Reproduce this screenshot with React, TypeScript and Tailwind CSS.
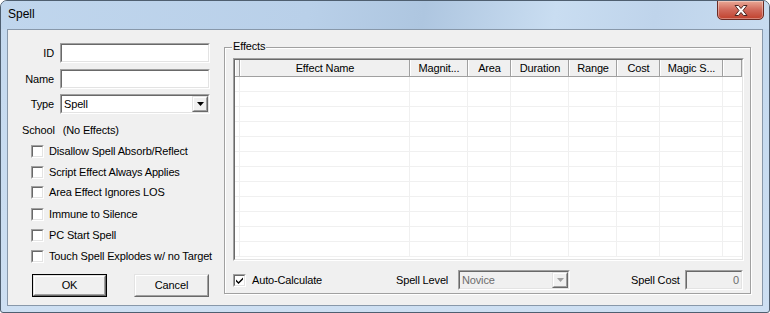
import type { ReactNode } from 'react';

// sunken 3D edge used by edits, list view and check boxes
const Sunken = ({ className = '', inner = '', children }: { className?: string; inner?: string; children?: ReactNode }) => (
    <div className={`border border-t-[#a0a0a0] border-l-[#a0a0a0] border-b-white border-r-white ${className}`}>
        <div className={`h-full w-full border border-t-[#696969] border-l-[#696969] border-b-[#e3e3e3] border-r-[#e3e3e3] ${inner}`}>
            {children}
        </div>
    </div>
);

const Raised = ({ className = '', children }: { className?: string; children?: ReactNode }) => (
    <div className={`border border-t-[#e3e3e3] border-l-[#e3e3e3] border-b-[#696969] border-r-[#696969] ${className}`}>
        <div className="h-full w-full border border-t-white border-l-white border-b-[#a0a0a0] border-r-[#a0a0a0] bg-[#f0f0f0] flex items-center justify-center">
            {children}
        </div>
    </div>
);

const Arrow = ({ color = '#000' }: { color?: string }) => (
    <svg width="7" height="4" viewBox="0 0 7 4">
        <path d="M0 0h7L3.5 4z" fill={color} />
    </svg>
);

const CheckBox = ({ checked = false }: { checked?: boolean }) => (
    <Sunken className="w-[13px] h-[13px] shrink-0" inner="bg-white flex items-center justify-center">
        {checked && (
            <svg width="7" height="7" viewBox="0 0 7 7">
                <path d="M0 2.5l2.5 2.5L7 0.5v2L2.5 7 0 4.5z" fill="#000" />
            </svg>
        )}
    </Sunken>
);

const Field = ({ label, children, mt }: { label: string; children: ReactNode; mt: string }) => (
    <div className={`flex items-center h-[20px] ${mt}`}>
        <span className="w-[46px] text-right">{label}</span>
        <div className="ml-[6px]">{children}</div>
    </div>
);

const flags = [
    { text: 'Disallow Spell Absorb/Reflect', mt: 'mt-[8px]' },
    { text: 'Script Effect Always Applies', mt: 'mt-[8px]' },
    { text: 'Area Effect Ignores LOS', mt: 'mt-[7px]' },
    { text: 'Immune to Silence', mt: 'mt-[9px]' },
    { text: 'PC Start Spell', mt: 'mt-[8px]' },
    { text: 'Touch Spell Explodes w/ no Target', mt: 'mt-[8px]' },
];

const columns = [
    { name: '', w: 'w-[5px]' },
    { name: 'Effect Name', w: 'w-[170px]' },
    { name: 'Magnit...', w: 'w-[58px]' },
    { name: 'Area', w: 'w-[43px]' },
    { name: 'Duration', w: 'w-[58px]' },
    { name: 'Range', w: 'w-[48px]' },
    { name: 'Cost', w: 'w-[43px]' },
    { name: 'Magic S...', w: 'w-[63px]' },
    { name: '', w: 'flex-1' },
];

export default function App() {
    return (
        <div className="w-[770px] h-[313px] relative overflow-hidden rounded-t-[7px] rounded-b-[3px] border border-[#4f5f70] bg-gradient-to-b from-[#c3d8ee] to-[#cddff2] font-['Liberation_Sans',sans-serif] text-[11px] tracking-[-0.15px] text-black leading-none">
            {/* Title bar */}
            <div className="h-[28px] flex items-center pl-[7px] pb-[3px] bg-[linear-gradient(100deg,#c0d6ed_0%,#b9d0e9_40%,#aec6e0_55%,#c9ddf1_72%,#bfd4eb_85%,#c8dcf0_100%)] text-[12px] tracking-normal">
                Spell
            </div>
            <div className="absolute top-[-1px] right-[5px] w-[47px] h-[20px] rounded-b-[5px] border border-[#6b2b24] bg-gradient-to-b from-[#e8a896] via-[#d0685a] to-[#c0402c] flex items-center justify-center shadow-[inset_0_0_0_1px_rgba(255,255,255,0.35)]">
                <svg width="14" height="11" viewBox="0 0 14 11">
                    <path d="M1 0.5h3.5L7 3.5l2.5-3H13L9 5.5l4 5H9.5L7 7.5l-2.5 3H1l4-5z" fill="#fff" stroke="#4a2420" strokeWidth="1" />
                </svg>
            </div>

            {/* Client area */}
            <div className="ml-[6px] w-[756px] h-[277px] border border-[#8898aa] bg-[#f0f0f0] flex">
                {/* Left column */}
                <div className="w-[208px] shrink-0 flex flex-col whitespace-nowrap">
                    <Field label="ID" mt="mt-[13px]">
                        <Sunken className="w-[150px] h-[20px]" inner="bg-white" />
                    </Field>
                    <Field label="Name" mt="mt-[6px]">
                        <Sunken className="w-[150px] h-[20px]" inner="bg-white" />
                    </Field>
                    <Field label="Type" mt="mt-[5px]">
                        <Sunken className="w-[150px] h-[20px]" inner="bg-white flex items-center">
                            <span className="flex-1 pl-[2px]">Spell</span>
                            <Raised className="w-[16px] h-[16px]">
                                <Arrow />
                            </Raised>
                        </Sunken>
                    </Field>
                    <div className="mt-[9px] h-[14px] flex items-center pl-[14px] gap-[8px]">
                        <span>School</span>
                        <span>(No Effects)</span>
                    </div>
                    {flags.map((f) => (
                        <div key={f.text} className={`flex items-center h-[13px] pl-[23px] gap-[5px] ${f.mt}`}>
                            <CheckBox />
                            <span>{f.text}</span>
                        </div>
                    ))}
                    <div className="flex mt-[11px] pl-[24px] gap-[27px]">
                        <div className="w-[75px] h-[23px] border border-black">
                            <Raised className="h-full">OK</Raised>
                        </div>
                        <Raised className="w-[75px] h-[23px]">Cancel</Raised>
                    </div>
                </div>

                {/* Effects group */}
                <div className="relative ml-[8px] mt-[17px] w-[527px] h-[247px] border border-[#a0a0a0] shadow-[inset_1px_1px_0_#fff,1px_1px_0_#fff] flex flex-col">
                    <span className="absolute top-[-7px] left-[7px] px-[1px] bg-[#f0f0f0]">Effects</span>
                    <Sunken className="ml-[8px] mt-[10px] w-[511px] h-[203px] overflow-hidden" inner="bg-white flex flex-col overflow-hidden">
                        <div className="flex h-[17px] shrink-0 border-b border-[#a0a0a0]">
                            {columns.map((c, i) => (
                                <div key={i} className={`${c.w} h-full bg-[#f0f0f0] border-l border-white border-r border-r-[#a0a0a0] shadow-[1px_0_0_#696969] flex items-center justify-center whitespace-nowrap overflow-hidden`}>
                                    {c.name}
                                </div>
                            ))}
                        </div>
                        {Array.from({ length: 12 }).map((_, r) => (
                            <div key={r} className="flex h-[15px] shrink-0 border-b border-[#f0f0f0]">
                                {columns.map((c, i) => (
                                    <div key={i} className={`${c.w} h-full ${i < columns.length - 1 ? 'border-r border-[#f0f0f0]' : ''}`} />
                                ))}
                            </div>
                        ))}
                    </Sunken>
                    <div className="flex items-center h-[20px] mt-[9px] ml-[8px] whitespace-nowrap">
                        <div className="w-[163px] flex items-center gap-[6px]">
                            <CheckBox checked />
                            <span>Auto-Calculate</span>
                        </div>
                        <span className="w-[62px]">Spell Level</span>
                        <Sunken className="w-[112px] h-[20px]" inner="bg-[#f0f0f0] flex items-center">
                            <span className="flex-1 pl-[2px] text-[#6d6d6d]">Novice</span>
                            <Raised className="w-[16px] h-[16px]">
                                <Arrow color="#a0a0a0" />
                            </Raised>
                        </Sunken>
                        <span className="ml-[61px] w-[54px]">Spell Cost</span>
                        <Sunken className="w-[58px] h-[20px]" inner="bg-[#f0f0f0] flex items-center justify-end pr-[2px] text-[#6d6d6d]">
                            0
                        </Sunken>
                    </div>
                </div>
            </div>
        </div>
    );
}
